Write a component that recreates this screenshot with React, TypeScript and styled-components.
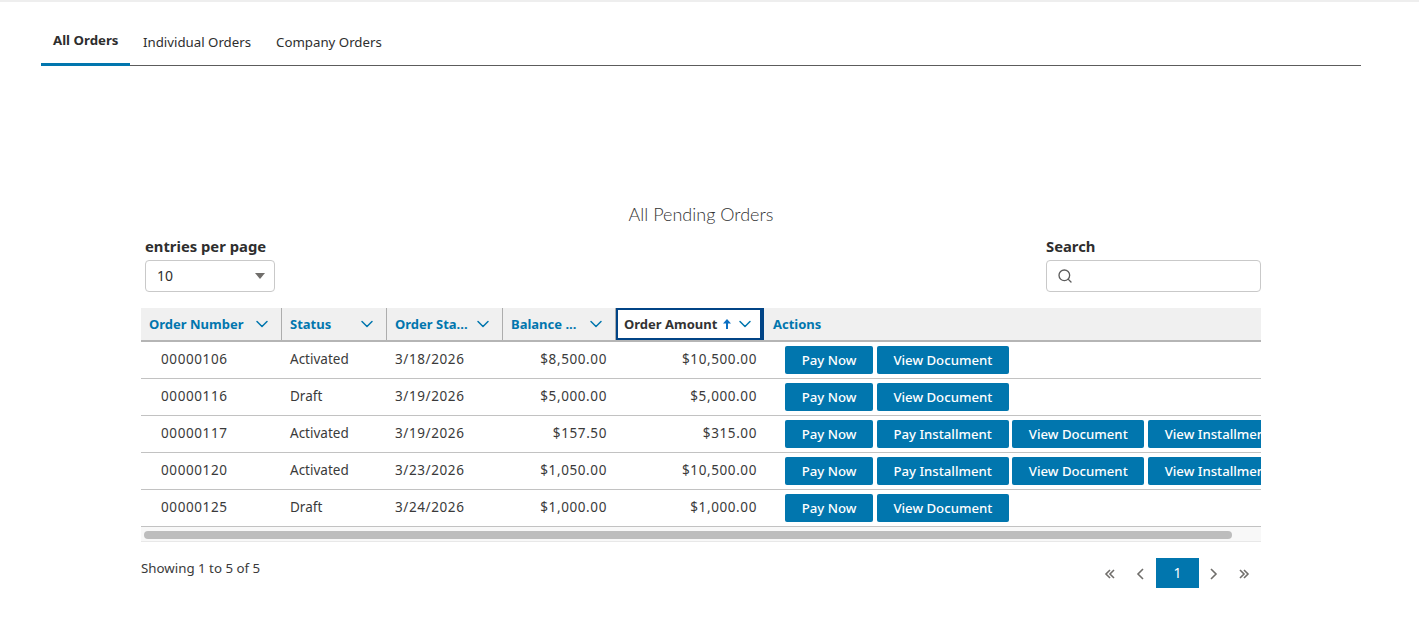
import React from 'react';
import styled, { createGlobalStyle } from 'styled-components';
import { ChevronDown, Search as SearchIcon } from 'lucide-react';

const GlobalStyle = createGlobalStyle`
  html, body {
    margin: 0;
    padding: 0;
    background: #fff;
    font-family: "Noto Sans", "Liberation Sans", sans-serif;
    font-size: 14px;
    color: #2e2e2e;
  }
`;

const Page = styled.div`
  border-top: 2px solid #eeeeee;
  width: 1419px;
  height: 636px;
  box-sizing: border-box;
  overflow: hidden;
`;

const TabBar = styled.div`
  display: flex;
  margin: 0 58px 0 41px;
  height: 64px;
  border-bottom: 1px solid #5c5c5c;
  box-sizing: border-box;
`;

const Tab = styled.div<{ $active?: boolean }>`
  padding: ${(p) => (p.$active ? '29px 11.5px 0 12px' : '31px 12px 0 13px')};
  font-size: 13.25px;
  line-height: 18px;
  font-weight: ${(p) => (p.$active ? 700 : 400)};
  height: 64px;
  box-sizing: border-box;
  border-bottom: ${(p) => (p.$active ? '3px solid #0176ae' : 'none')};
`;

const Content = styled.div`
  margin: 139px 158px 0 141px;
`;

const Title = styled.div`
  font-family: Lato, sans-serif;
  font-weight: 300;
  font-size: 18px;
  line-height: 18px;
  padding-bottom: 2px;
  text-align: center;
  color: #333;
`;

const Controls = styled.div`
  display: flex;
  justify-content: space-between;
  margin-top: 11px;
  padding-left: 4px;
`;

const Field = styled.div<{ $width: number }>`
  width: ${(p) => p.$width}px;
`;

const Label = styled.div`
  font-size: 14.8px;
  font-weight: 700;
  line-height: 20px;
  margin-bottom: 4px;
`;

const Box = styled.div`
  height: 32px;
  box-sizing: border-box;
  border: 1px solid #c9c9c9;
  border-radius: 4px;
  display: flex;
  align-items: center;
  justify-content: space-between;
  background: #fff;
`;

const SelectValue = styled.span`
  padding: 0 0 2px 11px;
  font-size: 14px;
`;

const Caret = styled.span`
  width: 0;
  height: 0;
  margin-right: 9px;
  border-left: 5.5px solid transparent;
  border-right: 5.5px solid transparent;
  border-top: 6px solid #706e6b;
`;

const SearchBox = styled(Box)`
  justify-content: flex-start;
  padding-left: 10px;
  color: #5c5c5c;
`;

const TableWrap = styled.div`
  margin-top: 16px;
  overflow: hidden;
`;

const Table = styled.table`
  width: 1120px;
  table-layout: fixed;
  border-collapse: collapse;
`;

const HeadRow = styled.tr`
  height: 33px;
  background: #f0f0f0;
  border-bottom: 2px solid #b5b5b5;
`;

const Th = styled.th<{ $width?: number }>`
  width: ${(p) => (p.$width ? `${p.$width}px` : 'auto')};
  padding: 0;
  text-align: left;
  font-size: 13px;
  font-weight: 700;
  color: #0176ae;
`;

const ThInner = styled.div<{ $sorted?: boolean; $last?: boolean }>`
  display: flex;
  align-items: center;
  justify-content: space-between;
  height: 32px;
  box-sizing: border-box;
  padding: 0 ${(p) => (p.$sorted ? '5px' : '9px')} 1px ${(p) => (p.$sorted ? '6px' : p.$last ? '9px' : '8px')};
  border-right: ${(p) => (p.$last ? 'none' : '1px solid #adadad')};
  ${(p) =>
    p.$sorted &&
    `
    background: #fff;
    color: #333;
    border: 2px solid #014486;
    border-right-width: 4px;
  `}
`;

const HeadLabel = styled.span`
  white-space: nowrap;
`;

const SortGroup = styled.span`
  display: flex;
  align-items: center;
  gap: 4px;
  color: #0176ae;
`;

const Row = styled.tr`
  height: 37px;
  border-bottom: 1px solid #c2c2c2;
`;

const Td = styled.td<{ $align?: string; $pad: string; $numeric?: boolean }>`
  padding: ${(p) => p.$pad};
  text-align: ${(p) => p.$align || 'left'};
  white-space: nowrap;
  font-size: 13.5px;
  letter-spacing: ${(p) => (p.$numeric ? '0.6px' : '0')};
  color: #3a3a3a;
  overflow: hidden;
`;

const Actions = styled.div`
  display: flex;
  gap: 3.5px;
  padding: 1px 0 0 21px;
`;

const ActionButton = styled.button`
  flex: none;
  height: 28px;
  padding: 0 16.75px;
  border: none;
  border-radius: 2px;
  background: #0176ae;
  color: #fff;
  font-family: inherit;
  font-size: 13.2px;
  font-weight: 500;
`;

const Track = styled.div`
  height: 15px;
  background: #f8f8f8;
  border-bottom: 1px solid #e8e8e8;
  box-sizing: border-box;
  padding: 4px 0 0 3px;
`;

const Thumb = styled.div`
  width: 1088px;
  height: 8px;
  border-radius: 4px;
  background: #bdbdbd;
`;

const Footer = styled.div`
  display: flex;
  justify-content: space-between;
  align-items: flex-start;
  margin-top: 16px;
`;

const Showing = styled.div`
  font-size: 13.3px;
  line-height: 20px;
  color: #3a3a3a;
`;

const Pager = styled.div`
  display: flex;
  align-items: center;
`;

const PagerArrow = styled.span<{ $width: number }>`
  width: ${(p) => p.$width}px;
  height: 30px;
  box-sizing: border-box;
  padding-top: 2px;
  display: flex;
  align-items: center;
  justify-content: center;
  color: #706e6b;
`;

const PageNumber = styled.div`
  width: 43px;
  height: 30px;
  background: #0176ae;
  color: #fff;
  font-size: 14px;
  display: flex;
  align-items: center;
  justify-content: center;
`;

const Angle = ({ d }: { d: string }) => (
  <svg width="12" height="14" viewBox="0 0 12 14" fill="none" stroke="currentColor" strokeWidth="1.6">
    <path d={d} />
  </svg>
);

const SortArrow = () => (
  <svg width="8" height="10" viewBox="0 0 8 10" fill="#0b6fc2">
    <path d="M4 0 8 4.5H5V10H3V4.5H0Z" />
  </svg>
);

const columns = [
  { label: 'Order Number', width: 141 },
  { label: 'Status', width: 105 },
  { label: 'Order Sta...', width: 116 },
  { label: 'Balance ...', width: 113 },
  { label: 'Order Amount', width: 148, sorted: true },
];

const basic = ['Pay Now', 'View Document'];
const full = ['Pay Now', 'Pay Installment', 'View Document', 'View Installments'];

const orders = [
  { id: '00000106', status: 'Activated', date: '3/18/2026', balance: '$8,500.00', amount: '$10,500.00', actions: basic },
  { id: '00000116', status: 'Draft', date: '3/19/2026', balance: '$5,000.00', amount: '$5,000.00', actions: basic },
  { id: '00000117', status: 'Activated', date: '3/19/2026', balance: '$157.50', amount: '$315.00', actions: full },
  { id: '00000120', status: 'Activated', date: '3/23/2026', balance: '$1,050.00', amount: '$10,500.00', actions: full },
  { id: '00000125', status: 'Draft', date: '3/24/2026', balance: '$1,000.00', amount: '$1,000.00', actions: basic },
];

export default function App() {
  return (
    <Page>
      <GlobalStyle />
      <TabBar>
        <Tab $active>All Orders</Tab>
        <Tab>Individual Orders</Tab>
        <Tab>Company Orders</Tab>
      </TabBar>
      <Content>
        <Title>All Pending Orders</Title>
        <Controls>
          <Field $width={130}>
            <Label>entries per page</Label>
            <Box>
              <SelectValue>10</SelectValue>
              <Caret />
            </Box>
          </Field>
          <Field $width={215}>
            <Label>Search</Label>
            <SearchBox>
              <SearchIcon size={16} strokeWidth={2} />
            </SearchBox>
          </Field>
        </Controls>
        <TableWrap>
          <Table>
            <thead>
              <HeadRow>
                {columns.map((col) => (
                  <Th key={col.label} $width={col.width}>
                    <ThInner $sorted={col.sorted}>
                      <HeadLabel>{col.label}</HeadLabel>
                      {col.sorted ? (
                        <SortGroup>
                          <SortArrow />
                          <ChevronDown size={20} strokeWidth={1.8} />
                        </SortGroup>
                      ) : (
                        <ChevronDown size={20} strokeWidth={1.8} />
                      )}
                    </ThInner>
                  </Th>
                ))}
                <Th>
                  <ThInner $last>
                    <HeadLabel>Actions</HeadLabel>
                  </ThInner>
                </Th>
              </HeadRow>
            </thead>
            <tbody>
              {orders.map((order) => (
                <Row key={order.id}>
                  <Td $numeric $pad="0 0 2px 20px">{order.id}</Td>
                  <Td $pad="0 0 2px 8px">{order.status}</Td>
                  <Td $numeric $pad="0 0 2px 8px">{order.date}</Td>
                  <Td $numeric $align="right" $pad="0 9px 2px 0">{order.balance}</Td>
                  <Td $numeric $align="right" $pad="0 7px 2px 0">{order.amount}</Td>
                  <Td $pad="0">
                    <Actions>
                      {order.actions.map((action) => (
                        <ActionButton key={action}>{action}</ActionButton>
                      ))}
                    </Actions>
                  </Td>
                </Row>
              ))}
            </tbody>
          </Table>
        </TableWrap>
        <Track>
          <Thumb />
        </Track>
        <Footer>
          <Showing>Showing 1 to 5 of 5</Showing>
          <Pager>
            <PagerArrow $width={32}>
              <Angle d="M6 3 2 7l4 4M10 3 6 7l4 4" />
            </PagerArrow>
            <PagerArrow $width={30}>
              <Angle d="M8 2 3 7l5 5" />
            </PagerArrow>
            <PageNumber>1</PageNumber>
            <PagerArrow $width={28}>
              <Angle d="m4 2 5 5-5 5" />
            </PagerArrow>
            <PagerArrow $width={34}>
              <Angle d="m2 3 4 4-4 4M6 3l4 4-4 4" />
            </PagerArrow>
          </Pager>
        </Footer>
      </Content>
    </Page>
  );
}
